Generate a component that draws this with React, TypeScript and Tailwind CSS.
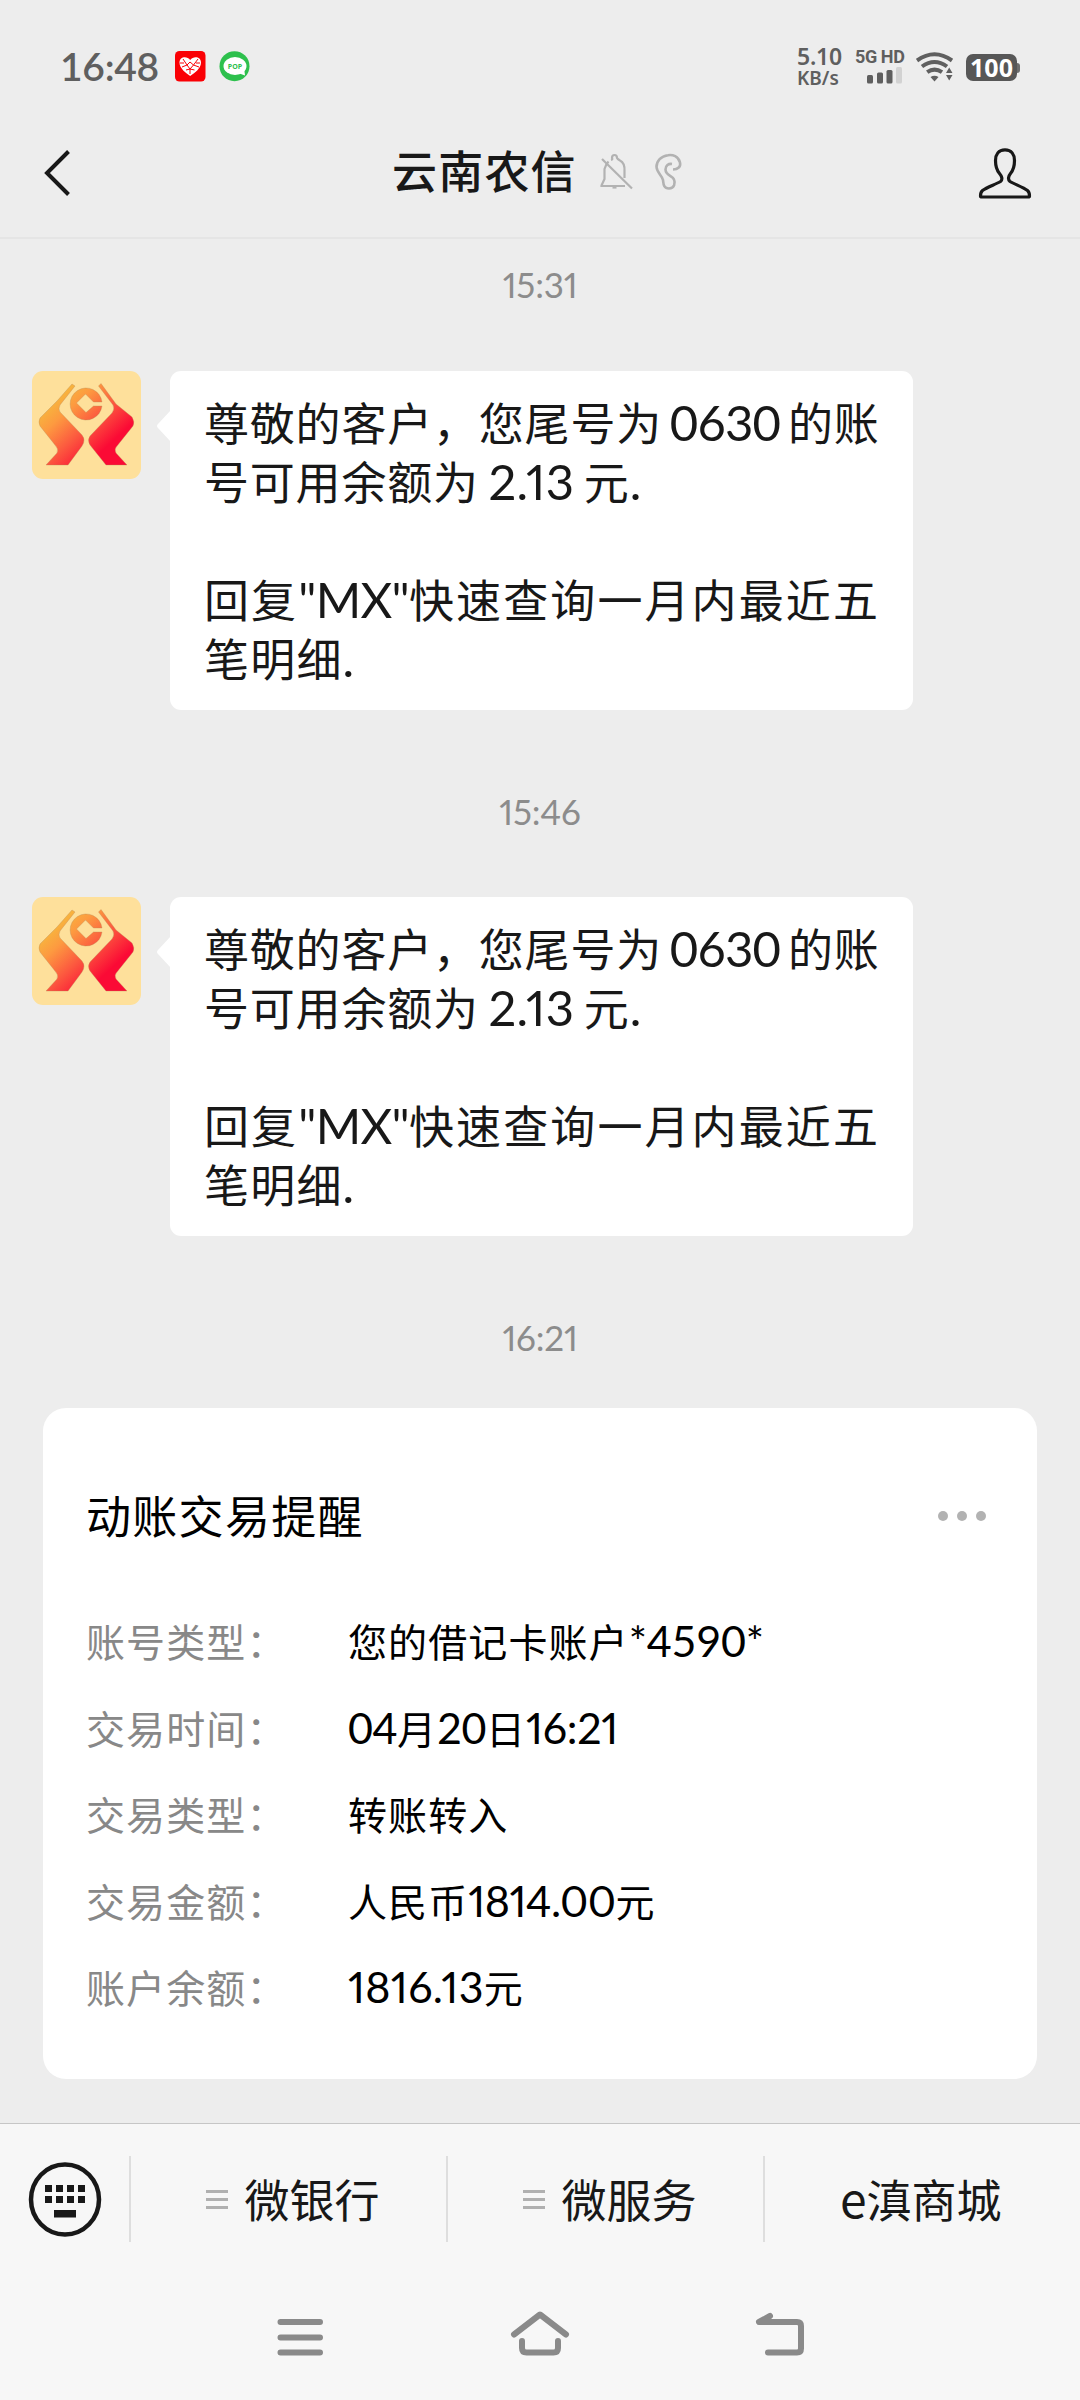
import type { ReactNode } from "react"

const rows = [
  { label: "账号类型：", value: ["您的借记卡账户", "*4590*"], digits: "tracking-[-0.200px]" },
  {
    label: "交易时间：",
    value: ["", "04", "月", "20", "日", "16:21"],
    digits: "tabular-nums tracking-[-0.500px] last:proportional-nums last:tracking-[-0.300px]",
  },
  { label: "交易类型：", value: ["转账转入"], digits: "" },
  { label: "交易金额：", value: ["人民币", "1814.00", "元"], digits: "proportional-nums tracking-[-0.600px]" },
  { label: "账户余额：", value: ["", "1816.13", "元"], digits: "proportional-nums tracking-[0.300px]" },
]

function StatusBar() {
  return (
    <div className="flex h-[104px] items-start pt-[42px] pl-[60px] text-[#5f5f5f]">
      <span className="h-12 w-[115px] font-['Lato',sans-serif] text-[39px] leading-[48px] font-semibold tracking-[-0.3px]">
        16:48
      </span>
      <svg className="mt-[9px]" width="31" height="31" viewBox="0 0 31 31">
        <rect width="30.5" height="30.5" rx="4.5" fill="#fa0005" />
        <path
          d="M15.200 25C11 22 4.500 17.500 4.500 11.500C4.500 5.500 12 4.500 15.200 9C18.500 4.500 26 5.500 26 11.500C26 17.500 19.500 22 15.200 25Z"
          fill="#fff"
        />
        <path
          d="M8 8L12 14L7 16M23 8L18.500 14L24 16M12 14L15 11L18.500 14L15 18ZM11 19L15 18L19.500 19M15 18V23M5 12H9M21 12H25"
          fill="none"
          stroke="#fa0005"
          strokeWidth="1"
        />
      </svg>
      <svg className="mt-[9px] ml-[13px]" width="31" height="31" viewBox="0 0 31 31">
        <circle cx="15.500" cy="15.200" r="15" fill="#2dc04d" />
        <ellipse cx="16" cy="15" rx="11.500" ry="9" fill="#fff" />
        <path d="M19 22L26 24.500L25 17Z" fill="#fff" />
        <text
          x="16"
          y="17.800"
          textAnchor="middle"
          fontFamily="Open Sans, sans-serif"
          fontWeight="700"
          fontSize="7"
          fill="#2dc04d"
        >
          POP
        </text>
      </svg>
      <div className="mt-[2px] ml-[547px] w-[58px] font-['Noto_Sans',sans-serif] font-semibold">
        <div className="h-[24px] text-[23px] leading-[24px] tracking-[-0.2px]">5.10</div>
        <div className="h-5 text-[19px] leading-[20px]">KB/s</div>
      </div>
      <div className="mt-[5px] w-[61px]">
        <div className="h-5 font-['Roboto',sans-serif] text-[18px] leading-[19px] font-bold tracking-[-0.4px] whitespace-pre">
          5G HD
        </div>
        <svg className="ml-[12px]" width="36" height="17" viewBox="0 0 36 17">
          <rect x="0" y="8" width="6" height="8.500" rx="1.500" fill="#5f5f5f" />
          <rect x="10" y="5.500" width="6" height="11" rx="1.500" fill="#5f5f5f" />
          <rect x="19.500" y="3" width="6" height="13.500" rx="1.500" fill="#5f5f5f" />
          <rect x="29" y="0" width="6" height="16.500" rx="1.500" fill="#d2d2d2" />
        </svg>
      </div>
      <svg className="mt-[10px]" width="38" height="31" viewBox="0 0 38 31">
        <g fill="none" stroke="#5f5f5f" strokeWidth="4">
          <path d="M1 8.500Q18.500 -4 36 8.500" />
          <path d="M6 14.500Q18.500 5.500 31 14.500" />
          <path d="M11.200 20.200Q18.500 15 26 20.200" />
        </g>
        <path d="M14.500 25Q18.500 22.500 22.500 25L18.500 29.500Z" fill="#5f5f5f" />
        <path d="M33.200 15.500L36.500 21H30Z M33.200 28.500L36.500 23H30Z" fill="#5f5f5f" />
      </svg>
      <div className="mt-[12px] ml-[12px] flex items-center">
        <div className="h-[27px] w-[51px] rounded-[7px] bg-[#575757] text-center font-['Open_Sans',sans-serif] text-[25px] leading-[26px] font-bold text-white">
          100
        </div>
        <div className="h-[10px] w-[3px] rounded-r-[3px] bg-[#6d6d6d]" />
      </div>
    </div>
  )
}

function Header() {
  return (
    <div className="flex h-[135px] items-start border-b-2 border-[#e5e5e5]">
      <svg className="mt-[44px] ml-[40px]" width="34" height="50" viewBox="0 0 34 50">
        <path d="M28.500 3.500L7 25L28.500 46.500" fill="none" stroke="#181818" strokeWidth="4" />
      </svg>
      <h1 className="mt-[36px] ml-[318px] h-[60px] w-[208px] text-[45px] leading-[60px] font-medium tracking-[1.2px] text-[#181818]">
        云南农信
      </h1>
      <svg className="mt-[49px]" width="34" height="38" viewBox="0 0 34 38" fill="none" stroke="#b2b2b2" strokeWidth="2.200">
        <path d="M8.500 8.500Q6 11 4.500 16V26L1.500 32.500V33H25M11 7Q13 6.500 12 5Q12 2 14.500 2Q17 2 17 5Q17.500 6 20 7.500Q25 10 24.500 18V25" />
        <path d="M2 6L32 35.500" />
        <path d="M12.500 34.500H16.500" />
      </svg>
      <svg className="mt-[49px] ml-[20px]" width="30" height="38" viewBox="0 0 30 38" fill="none" stroke="#b2b2b2" strokeWidth="2.600">
        <path d="M19 16.500C24 16.500 27 13.500 26 9.500C24.500 3 18.500 1.500 14 2.200C7 3 2.500 8 2.500 14C3 20 8.500 23 9 27C9.500 31 9.500 35.500 15 35.500C20.500 35.500 21.500 30 20 26.500C18.500 22.500 11.500 22.500 11.500 16.500C11.500 12.500 14.500 10.500 18 11" />
      </svg>
      <svg className="mt-[42px] ml-[293px]" width="56" height="54" viewBox="0 0 56 54">
        <path
          d="M28 3.800C21.500 3.800 18.500 8.500 18.500 14.500C18.500 20 19.500 24 22.500 27.500C24.700 30 26 33.500 23.500 35.500C18.500 38.500 10 41 5.500 44.500C3.700 46 3.500 48 3.500 50Q3.500 51 5 51H51Q52.500 51 52.500 50C52.500 48 52.300 46 50.500 44.500C46 41 38 38.500 33 35.500C30.500 33.500 31.500 30 33.500 27.500C36.500 24 37.500 20 37.500 14.500C37.500 8.500 34.500 3.800 28 3.800Z"
          fill="none"
          stroke="#181818"
          strokeWidth="3.200"
        />
      </svg>
    </div>
  )
}

function Time({ children }: { children: ReactNode }) {
  return (
    <div className="h-10 text-center font-['Lato',sans-serif] text-[35px] leading-[40px] tracking-[-0.200px] text-[#8c8c8c] proportional-nums">
      {children}
    </div>
  )
}

function Avatar({ id }: { id: string }) {
  return (
    <svg className="rounded-[11px]" width="109" height="108" viewBox="0 0 109 108">
      <defs>
        <linearGradient id={id} gradientUnits="userSpaceOnUse" x1="15" y1="20" x2="70" y2="80">
          <stop offset="0" stopColor="#f3c73c" />
          <stop offset="0.350" stopColor="#fd9a40" />
          <stop offset="0.650" stopColor="#fc5a3f" />
          <stop offset="1" stopColor="#fb0a35" />
        </linearGradient>
      </defs>
      <rect width="109" height="108" fill="#fee09b" />
      <g fill={`url(#${id})`} stroke="#b98a55" strokeOpacity="0.500" strokeWidth="0.700">
        <path d="M40 13L43 15L28 34Q26 38 28 41L50 64Q54 69 50 75L36 94H14L25 82Q27 78 23 74L8 55Q6 51 8 47L25 30Z" />
        <path d="M69 12.500L66.500 15L81 34Q83 38 80 42L58 65Q55 69 58 74L74 94H95L84 82Q82 78 85 75L101 55Q103 51 100 46L84 33Z" />
        <path d="M70 31A16 16 0 1 0 70 35H61.500L54 41.500L44.500 32L53.500 23L61.500 31Z" />
      </g>
    </svg>
  )
}

function Latin({ className = "", children }: { className?: string; children: ReactNode }) {
  return <span className={"font-['Lato',sans-serif] text-[49px] leading-none " + className}>{children}</span>
}

function Message({ id }: { id: string }) {
  return (
    <div className="flex h-[339px] pl-8">
      <Avatar id={id} />
      <svg className="mt-[39px] ml-[15px]" width="15" height="32" viewBox="0 0 15 32">
        <path d="M15 0V32L2 18Q0 16 2 14Z" fill="#fff" />
      </svg>
      <div className="-ml-px h-[339px] w-[743px] rounded-[11px] bg-white pt-[21px] pl-[34px] text-[45px] leading-[59px] tracking-[0.8px] whitespace-pre text-[#181818]">
        <p className="h-[59px]">
          尊敬的客户，您尾号为<Latin className="tracking-[-0.800px] [word-spacing:-4px]"> 0630 </Latin>的账
        </p>
        <p className="h-[59px]">
          号可用余额为<Latin className="tracking-[0.200px] [word-spacing:-3px] proportional-nums"> 2.13 </Latin>元
          <Latin>.</Latin>
        </p>
        <p className="h-[59px]"> </p>
        <p className="h-[59px] tracking-[2.1px]">
          回复<Latin className="tracking-[-0.700px]">"MX"</Latin>快速查询一月内最近五
        </p>
        <p className="h-[59px] tracking-[1.2px]">
          笔明细<Latin>.</Latin>
        </p>
      </div>
    </div>
  )
}

function Card() {
  return (
    <div className="mx-[43px] h-[671px] rounded-[23px] bg-white pt-[77px] pl-[43px] text-black">
      <div className="flex h-[60px] items-center">
        <h2 className="w-[852px] text-[45px] leading-[60px] tracking-[1.300px]">动账交易提醒</h2>
        <div className="mt-[2px] flex gap-[9px]">
          <i className="size-[10px] rounded-full bg-[#b2b2b2]" />
          <i className="size-[10px] rounded-full bg-[#b2b2b2]" />
          <i className="size-[10px] rounded-full bg-[#b2b2b2]" />
        </div>
      </div>
      <dl className="pt-[52px] text-[39px] leading-[87px] tracking-[1.100px]">
        {rows.map((row) => (
          <div key={row.label} className="flex h-[86.600px] whitespace-nowrap">
            <dt className="w-[262px] text-[#888]">{row.label}</dt>
            <dd>
              {row.value.map((part, i) =>
                i % 2 ? (
                  <span key={i} className={"font-['Lato',sans-serif] text-[43px] leading-none " + row.digits}>
                    {part}
                  </span>
                ) : (
                  part
                )
              )}
            </dd>
          </div>
        ))}
      </dl>
    </div>
  )
}

function MenuItem({ children }: { children: ReactNode }) {
  return (
    <div className="flex w-[317px] items-center border-l-2 border-[#dedede] pl-[75px]">
      <div className="flex w-[38.500px] flex-col gap-[5px]">
        <i className="h-[3px] w-[22px] bg-[#b0b0b0]" />
        <i className="h-[3px] w-[22px] bg-[#b0b0b0]" />
        <i className="h-[3px] w-[22px] bg-[#b0b0b0]" />
      </div>
      <span className="leading-[60px]">{children}</span>
    </div>
  )
}

function BottomBar() {
  return (
    <div className="h-[277px] border-t border-[#c6c6c6] bg-[#f7f7f7] text-[#181818]">
      <div className="flex h-[152px] pt-[32px]">
        <div className="w-[129px] pl-[28px]">
          <svg className="mt-[6px]" width="74" height="76" viewBox="0 0 74 76" fill="#181818">
            <ellipse cx="37" cy="37.500" rx="34" ry="35" fill="none" stroke="#181818" strokeWidth="4.500" />
            {[17, 28, 39, 50].map((x) => (
              <g key={x}>
                <rect x={x} y="23" width="7" height="7" />
                <rect x={x} y="34" width="7" height="7" />
              </g>
            ))}
            <rect x="26" y="48" width="22" height="7.500" />
          </svg>
        </div>
        <div className="flex h-[86px] text-[45px]">
          <MenuItem>微银行</MenuItem>
          <MenuItem>微服务</MenuItem>
          <div className="flex w-[317px] items-center border-l-2 border-[#dedede] pl-[75px]">
            <span className="leading-[60px]">
              <span className="text-[48px] leading-none">e</span>滇商城
            </span>
          </div>
        </div>
      </div>
      <div className="flex pt-[26px] pl-[270px]">
        <svg width="540" height="76" viewBox="270 2302 540 76" fill="none" stroke="#8a8a8a" strokeWidth="6" strokeLinecap="round">
          <path d="M280.500 2322H320M280.500 2337.500H320M280.500 2352.500H320" />
          <path d="M514 2334.500L540 2314.500L566 2334.500M522 2341V2348Q522 2352.500 526.500 2352.500H553.500Q558 2352.500 558 2348V2341" strokeLinejoin="round" />
          <path d="M770 2316L759 2322H797Q801 2322 801 2326V2348.500Q801 2352.500 797 2352.500H768" strokeLinejoin="round" />
        </svg>
      </div>
    </div>
  )
}

export default function App() {
  return (
    <div className="flex h-[2400px] w-[1080px] flex-col overflow-hidden bg-[#ededed] font-['Noto_Sans_CJK_SC',sans-serif]">
      <StatusBar />
      <Header />
      <main className="h-[1884px] pt-[25px]">
        <Time>15:31</Time>
        <div className="h-[67px]" />
        <Message id="logo-a" />
        <div className="h-[81px]" />
        <Time>15:46</Time>
        <div className="h-[66px]" />
        <Message id="logo-b" />
        <div className="h-[81px]" />
        <Time>16:21</Time>
        <div className="h-[51px]" />
        <Card />
      </main>
      <BottomBar />
    </div>
  )
}
